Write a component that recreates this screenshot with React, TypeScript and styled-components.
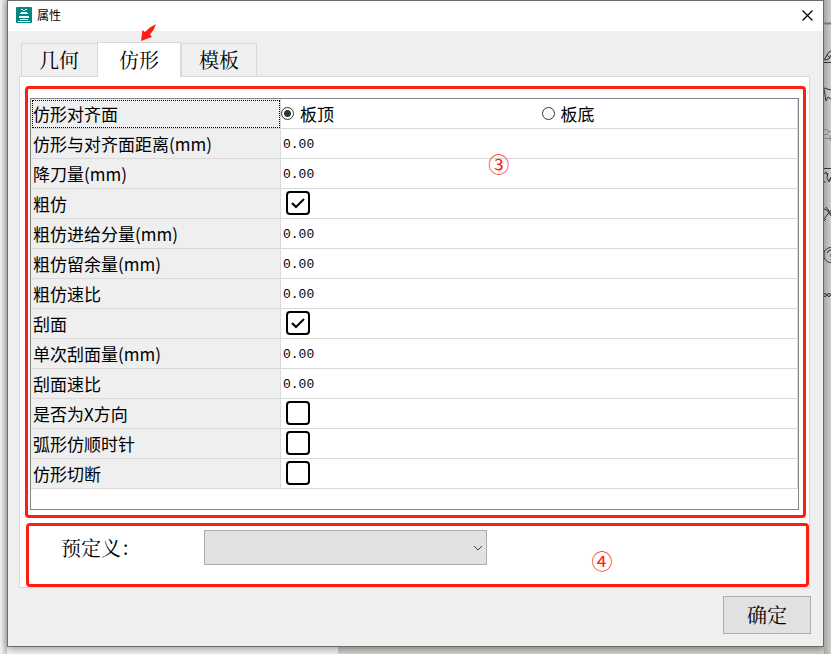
import React from "react";
import styled, { createGlobalStyle } from "styled-components";

const GlobalStyle = createGlobalStyle`
  *, *::before, *::after { box-sizing: border-box; }
  html, body, #root { height: 100%; }
  body {
    margin: 0;
    overflow: hidden;
    background: linear-gradient(#c2c1bb, #d4d3cc) 338px 100% / 100% 8px no-repeat, #f3f3f3;
    color: #000;
    font-family: "Noto Sans CJK SC", "Noto Sans", sans-serif;
  }
  button, input, select { font: inherit; color: inherit; margin: 0; }
`;

const line = "#d9d9d9";
const red = "#ff1d10";
const formFont = `"Noto Serif CJK SC", "Noto Sans CJK SC", sans-serif`;

const Desktop = styled.div`
  display: grid;
  grid-template-columns: 7px minmax(0, 1fr) 7px;
  min-height: 100%;
`;

const SideStrip = styled.div`
  background: linear-gradient(to right, #f6f6f6, #c8c8c8);
`;

const ToolStrip = styled.aside`
  background: linear-gradient(to right, #a5a7a6, #cfcfcc);
  overflow: hidden;
`;

const Dialog = styled.main`
  display: flex;
  flex-direction: column;
  margin-bottom: 7px;
  border: 1px solid #6b6b6b;
  background: #efefef;
  box-shadow: 0 2px 8px rgba(0, 0, 0, 0.35);
`;

const TitleBar = styled.header`
  display: flex;
  align-items: center;
  height: 30px;
  padding: 0 8px 2px;
  gap: 5px;
  background: #fff;
`;

const Title = styled.h1`
  flex: 1;
  margin: 0;
  font-size: 12px;
  font-weight: 400;
  line-height: 16px;
`;

const CloseButton = styled.button`
  display: flex;
  padding: 2px;
  border: 0;
  background: none;
`;

const Content = styled.div`
  display: flex;
  flex: 1;
  flex-direction: column;
  padding: 11px 12px;
`;

const Tabs = styled.div`
  position: relative;
  z-index: 1;
  display: flex;
  align-items: flex-end;
  padding-left: 1px;
`;

const Tab = styled.button<{ $active?: boolean }>`
  height: ${(p) => (p.$active ? 35 : 33)}px;
  margin-bottom: ${(p) => (p.$active ? -1 : 0)}px;
  padding: 0 ${(p) => (p.$active ? 21 : 17)}px;
  border: 1px solid ${line};
  border-bottom: 0;
  background: ${(p) => (p.$active ? "#fff" : "#f0f0f0")};
  font-family: ${formFont};
  font-size: 20px;
  line-height: 30px;
  & + & { border-left-width: ${(p) => (p.$active ? 1 : 0)}px; }
  &:first-child { border-right: 0; padding-right: 18px; }
`;

const Arrow = styled.svg`
  position: absolute;
  left: 120px;
  top: -19px;
`;

const Pane = styled.section`
  display: flex;
  flex: 1;
  flex-direction: column;
  gap: 5px;
  padding: 9px 0 0 5px;
  margin: 0 1px 0 -1px;
  border: 1px solid ${line};
  background: #fff;
`;

const Marked = styled.section`
  position: relative;
  border: 3px solid ${red};
  border-radius: 4px;
`;

const GridArea = styled(Marked)`
  flex: 1;
  margin-right: 3px;
  padding: 9px 4px 5px 2px;
`;

const PresetArea = styled(Marked)`
  display: flex;
  align-items: flex-start;
  height: 64px;
  margin-left: 1px;
  padding: 4px 32px;
`;

const Mark = styled.span<{ $left: number; $top: number }>`
  position: absolute;
  left: ${(p) => p.$left}%;
  top: ${(p) => p.$top}px;
  margin-left: 3px;
  color: ${red};
  font-size: 21px;
  line-height: 24px;
`;

const Frame = styled.div`
  height: 100%;
  border: 1px solid #828790;
`;

const Table = styled.table`
  width: 100%;
  border-collapse: separate;
  border-spacing: 0;
  table-layout: fixed;
`;

const NameCell = styled.th<{ $focused?: boolean }>`
  width: 250px;
  height: 30px;
  padding: 0 0 0 2px;
  border-right: 1px solid ${line};
  border-bottom: 1px solid ${line};
  background: #efefef;
  outline: ${(p) => (p.$focused ? "1px dotted #000" : "none")};
  outline-offset: -2px;
  font-size: 17px;
  font-weight: 400;
  line-height: 24px;
  text-align: left;
`;

const ValueCell = styled.td`
  height: 30px;
  padding: 0;
  border-right: 1px solid ${line};
  border-bottom: 1px solid ${line};
`;

const NumberInput = styled.input`
  display: block;
  width: 100%;
  height: 24px;
  padding: 2px 2px 0;
  border: 0;
  outline: 0;
  background: transparent;
  font-family: "Liberation Mono", monospace;
  font-size: 13px;
`;

const Choices = styled.div`
  display: grid;
  grid-template-columns: 1fr 1fr;
  column-gap: 5px;
`;

const Choice = styled.label`
  display: flex;
  align-items: center;
  gap: 6px;
  font-size: 17px;
  line-height: 24px;
`;

const Radio = styled.input`
  appearance: none;
  width: 13px;
  height: 13px;
  border: 1px solid #333;
  border-radius: 50%;
  background: #fff;
  &:checked { background: radial-gradient(circle, #333 0 3px, #fff 4px); }
`;

const CheckWrap = styled.span`
  display: grid;
  width: 24px;
  height: 24px;
  margin: 0 0 2px 5px;
  & > * { grid-area: 1 / 1; }
`;

const CheckBox = styled.input`
  appearance: none;
  width: 24px;
  height: 24px;
  border: 2px solid #000;
  border-radius: 4px;
  & + svg { visibility: hidden; pointer-events: none; }
  &:checked + svg { visibility: visible; }
`;

const PresetLabel = styled.label`
  width: 143px;
  font-family: ${formFont};
  font-size: 20px;
  line-height: 35px;
`;

const SelectWrap = styled.div`
  display: grid;
  flex: 0 1 283px;
  align-items: center;
  & > * { grid-area: 1 / 1; }
  & > svg { justify-self: end; margin-right: 4px; pointer-events: none; }
`;

const Select = styled.select`
  appearance: none;
  width: 100%;
  height: 35px;
  border: 1px solid #adadad;
  border-radius: 0;
  background: #e1e1e1;
`;

const Footer = styled.footer`
  display: flex;
  justify-content: flex-end;
  padding-top: 8px;
  margin-bottom: 1px;
`;

const OkButton = styled.button`
  width: 88px;
  height: 38px;
  border: 1px solid #adadad;
  background: #e1e1e1;
  font-family: ${formFont};
  font-size: 20px;
  line-height: 30px;
`;

type Row = { name: string; value: string | boolean };

const rows: Row[] = [
  { name: "仿形与对齐面距离(mm)", value: "0.00" },
  { name: "降刀量(mm)", value: "0.00" },
  { name: "粗仿", value: true },
  { name: "粗仿进给分量(mm)", value: "0.00" },
  { name: "粗仿留余量(mm)", value: "0.00" },
  { name: "粗仿速比", value: "0.00" },
  { name: "刮面", value: true },
  { name: "单次刮面量(mm)", value: "0.00" },
  { name: "刮面速比", value: "0.00" },
  { name: "是否为X方向", value: false },
  { name: "弧形仿顺时针", value: false },
  { name: "仿形切断", value: false },
];

function PropertyRow({ row, id }: { row: Row; id: string }) {
  return (
    <tr>
      <NameCell scope="row">
        <label htmlFor={id}>{row.name}</label>
      </NameCell>
      <ValueCell>
        {typeof row.value === "string" ? (
          <NumberInput id={id} defaultValue={row.value} />
        ) : (
          <CheckWrap>
            <CheckBox id={id} type="checkbox" defaultChecked={row.value} />
            <svg width="24" height="24" fill="none" stroke="#000" strokeWidth="2">
              <path d="M6 12l4 4 8-8" />
            </svg>
          </CheckWrap>
        )}
      </ValueCell>
    </tr>
  );
}

export default function App() {
  return (
    <>
      <GlobalStyle />
      <Desktop>
        <SideStrip />
        <Dialog>
          <TitleBar>
            <svg width="16" height="16" viewBox="0 0 16 16">
              <rect width="16" height="16" rx="1" fill="#078783" />
              <path d="M5 2h2v1H5zM9 2h2v1H9zM7 3h2v1H7zM5 5h6v1H5zM4 6h8v1H4zM3 9h10v2H3zM4 12h8v1H4zM2 14h12v1H2z" fill="#e8ffff" />
            </svg>
            <Title>属性</Title>
            <CloseButton aria-label="关闭">
              <svg width="11" height="11" fill="none" stroke="#000" strokeWidth="1.2">
                <path d="M.5.5l10 10M10.5.5l-10 10" />
              </svg>
            </CloseButton>
          </TitleBar>
          <Content>
            <Tabs role="tablist">
              <Tab role="tab">几何</Tab>
              <Tab role="tab" $active aria-selected>仿形</Tab>
              <Tab role="tab">模板</Tab>
              <Arrow width="17" height="19" fill={red}>
                <path d="M16 1L10 4.500 5 9 2.500 7 1 18l11-4-2-2.500 3.500-4.500z" />
              </Arrow>
            </Tabs>
            <Pane>
              <GridArea>
                <Frame>
                  <Table>
                    <tbody>
                      <tr>
                        <NameCell scope="row" $focused>仿形对齐面</NameCell>
                        <ValueCell>
                          <Choices>
                            <Choice><Radio type="radio" name="face" defaultChecked />板顶</Choice>
                            <Choice><Radio type="radio" name="face" />板底</Choice>
                          </Choices>
                        </ValueCell>
                      </tr>
                      {rows.map((row, i) => (
                        <PropertyRow key={row.name} row={row} id={`property-${i}`} />
                      ))}
                    </tbody>
                  </Table>
                </Frame>
                <Mark $left={59} $top={62}>③</Mark>
              </GridArea>
              <PresetArea>
                <PresetLabel htmlFor="preset">预定义：</PresetLabel>
                <SelectWrap>
                  <Select id="preset" />
                  <svg width="10" height="6" fill="none" stroke="#444">
                    <path d="M1 1l4 4 4-4" />
                  </svg>
                </SelectWrap>
                <Mark $left={72} $top={22}>④</Mark>
              </PresetArea>
            </Pane>
            <Footer>
              <OkButton>确定</OkButton>
            </Footer>
          </Content>
        </Dialog>
        <ToolStrip>
          <svg width="7" height="310" fill="none" stroke="#333">
            <path d="M0 23.500h7" stroke="#777" strokeWidth="2" />
            <path d="M0 60l5-8 2-1M1 60l4-1 2-4M3 55l3 3" />
            <path d="M0 62.500h7M0 168.500h7" />
            <path d="M0 88l7 2M0 89l2 12 2-4 3 2" />
            <path d="M0 129.500h3q1.500 0 1.500 2v1q0 2-1.500 2H0M5 131.500h2M0 138.500h7M6 135v6" stroke="#888" />
            <path d="M0 174l2-2 1 3M0 182h2M4 173l-1 5 2 4 2-5M5 181l2-4" />
            <path d="M0 209l3 1 4 6M0 219l7-9M0 221l2-2M2 207l5 7" />
            <path d="M7 247.500q-5 0-7 5v5q2 5 7 5M3.500 253q0-3 3.500-3M7 254v3M7 259v1" />
            <circle cx="1" cy="295" r="1.500" />
            <circle cx="5" cy="295" r="1.500" />
          </svg>
        </ToolStrip>
      </Desktop>
    </>
  );
}
